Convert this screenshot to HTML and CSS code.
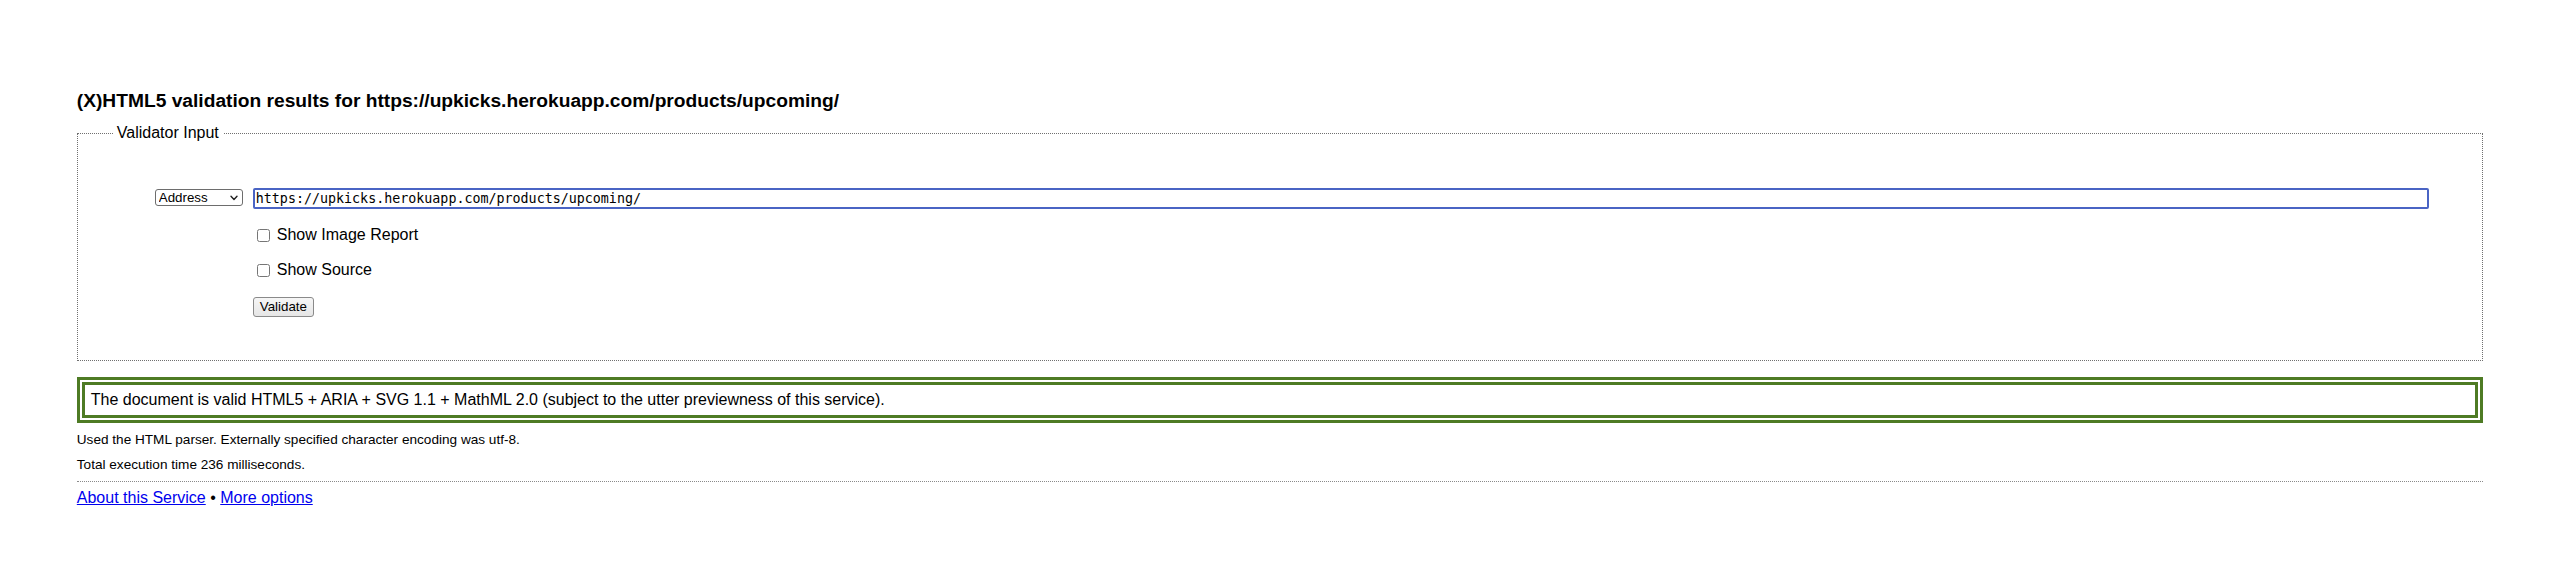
FILE: index.html
```html
<!DOCTYPE html>
<html lang="en">
<head>
<meta charset="utf-8">
<title>Validation results</title>
<link rel="stylesheet" href="styles.css">
</head>
<body>
<h1 class="title">(X)HTML5 validation results for https://upkicks.herokuapp.com/products/upcoming/</h1>
<form class="form">
  <fieldset class="box">
    <legend class="box-legend">Validator Input</legend>
    <div class="box-grid">
      <select class="doc-select"><option>Address</option></select>
      <input class="doc-url" type="url" value="https://upkicks.herokuapp.com/products/upcoming/">
      <span class="spacer"></span>
      <label class="check"><input class="check-box" type="checkbox">Show Image Report</label>
      <span class="spacer"></span>
      <label class="check"><input class="check-box" type="checkbox">Show Source</label>
      <span class="spacer"></span>
      <div><button class="submit" type="button">Validate</button></div>
    </div>
  </fieldset>
</form>
<p class="success">The document is valid HTML5 + ARIA + SVG 1.1 + MathML 2.0 (subject to the utter previewness of this service).</p>
<p class="details">Used the HTML parser. Externally specified character encoding was utf-8.</p>
<p class="details">Total execution time 236 milliseconds.</p>
<p class="footer"><a class="link" href="#">About this Service</a> • <a class="link" href="#">More options</a></p>
</body>
</html>
```
FILE: styles.css
```css
html, body {
  margin: 0;
  background: #ffffff;
}
body {
  padding: 90px 3% 0;
  font-family: "Liberation Sans", Arial, Helvetica, sans-serif;
  color: #000;
  font-size: 16px;
}
.title {
  margin: 0 0 12px;
  font-size: 19.2px;
  line-height: 22px;
  font-weight: bold;
}
.form {
  margin: 0;
}
.box {
  margin: 0;
  padding: 0;
  border: 1px dotted #707070;
  min-width: 0;
}
.box-legend {
  margin-left: 35px;
  padding: 0 4px;
  font-size: 16px;
  line-height: 18px;
}
.box-grid {
  display: grid;
  grid-template-columns: 88px 1fr;
  column-gap: 10px;
  row-gap: 17px;
  padding: 46px 53px 43px 77px;
  align-items: start;
}
.doc-select {
  appearance: none;
  -webkit-appearance: none;
  margin: 1px 0 0;
  width: 88px;
  height: 17px;
  box-sizing: border-box;
  border: 1px solid #6d6d6d;
  border-radius: 3px;
  padding: 0 0 0 3px;
  font-family: "Liberation Sans", Arial, sans-serif;
  font-size: 13.33px;
  line-height: 15px;
  color: #000;
  background-color: #fff;
  background-image: url("data:image/svg+xml;utf8,<svg xmlns='http://www.w3.org/2000/svg' width='8' height='6' viewBox='0 0 8 6'><path d='M1 1.2 L4 4.4 L7 1.2' fill='none' stroke='%23222' stroke-width='1.4' stroke-linecap='round' stroke-linejoin='round'/></svg>");
  background-repeat: no-repeat;
  background-position: right 4px center;
}
.doc-url {
  display: block;
  width: 100%;
  height: 21px;
  box-sizing: border-box;
  margin: 0;
  border: 2px solid #4a64c4;
  border-radius: 2px;
  padding: 0 0 0 1px;
  font-family: "DejaVu Sans Mono", "Liberation Mono", monospace;
  font-size: 13.33px;
  color: #000;
  outline: none;
}
.spacer {
  display: block;
}
.check {
  display: flex;
  align-items: center;
  gap: 7px;
  height: 18.4px;
  font-size: 16px;
  line-height: 18.4px;
}
.check-box {
  margin: 0 0 0 4px;
  width: 13px;
  height: 13px;
}
.submit {
  margin: 0;
  height: 20px;
  box-sizing: border-box;
  padding: 0 6px;
  border: 1px solid #8a8a8a;
  border-radius: 3px;
  background: linear-gradient(#f6f6f6, #e6e6e6);
  font-family: "Liberation Sans", Arial, sans-serif;
  font-size: 13.33px;
  line-height: 17px;
  color: #000;
}
.success {
  margin: 16px 0 0;
  border: 8px double #4e7b24;
  padding: 6px;
  font-size: 16px;
  line-height: 18px;
}
.details {
  margin: 9.5px 0 0;
  font-size: 13.6px;
  line-height: 15.6px;
}
.footer {
  margin: 8px 0 0;
  border-top: 1px dotted #8a8a8a;
  padding-top: 7px;
  font-size: 16px;
  line-height: 18.4px;
}
.link {
  color: #0000ee;
  text-decoration: underline;
}
```
